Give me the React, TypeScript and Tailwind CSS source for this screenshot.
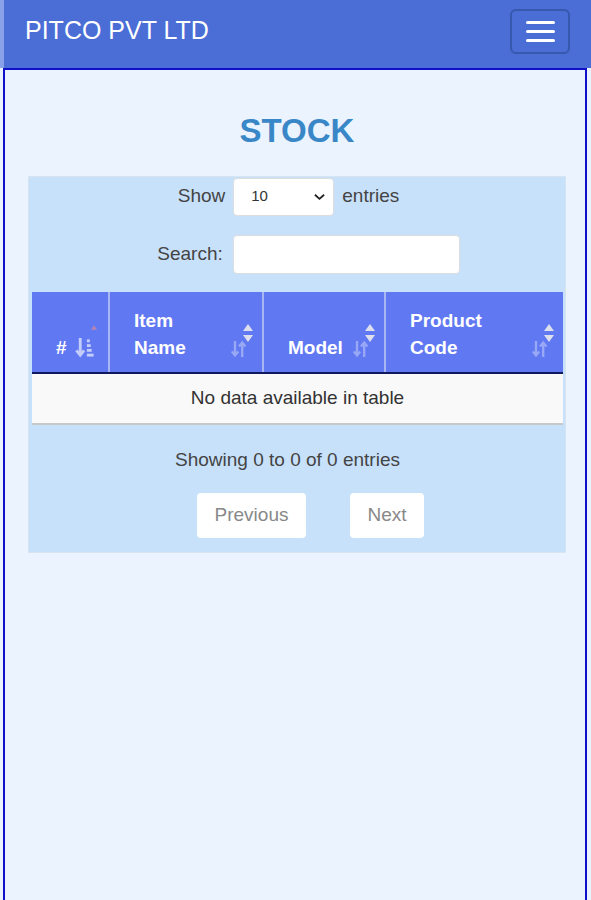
const COLUMNS = [
  { key: "#", label: ["#"], width: "w-[76px]", active: true },
  { key: "item", label: ["Item", "Name"], width: "w-[154px]" },
  { key: "model", label: ["Model"], width: "w-[122px]" },
  { key: "code", label: ["Product", "Code"], width: "flex-1" },
];

function SortIcon({ active }: { active?: boolean }) {
  if (active) {
    return (
      <>
        <svg viewBox="0 0 8 6" className="absolute right-[11px] top-[33px] h-[5px] w-[6px]">
          <path d="M4 0 L8 6 H0 Z" fill="#d98a9a" opacity="0.7" />
        </svg>
        <svg viewBox="0 0 20 22" className="absolute right-[13px] top-[45px] h-[21px] w-[20px]">
          <g fill="none" stroke="#c4cefa" strokeWidth="3">
            <path d="M5 1 V19" />
            <path d="M1 14 L5 19 L9 14" />
            <path d="M12 4 H15" />
            <path d="M12 9 H16" />
            <path d="M12 14 H17" />
            <path d="M12 19 H19" />
          </g>
        </svg>
      </>
    );
  }
  return (
    <>
      <svg viewBox="0 0 20 22" className="absolute right-[15px] top-[48px] h-[18px] w-[16px]">
        <g fill="none" stroke="#a6b4f8" strokeWidth="3" opacity="0.8">
          <path d="M5 1 V19" />
          <path d="M1 14 L5 19 L9 14" />
          <path d="M14 21 V3" />
          <path d="M10 8 L14 3 L18 8" />
        </g>
      </svg>
      <svg viewBox="0 0 10 18" className="absolute right-[9px] top-[32px] h-[18px] w-[10px]">
        <path d="M5 0 L10 7 H0 Z" fill="#dde0ec" />
        <path d="M5 18 L10 11 H0 Z" fill="#dde0ec" />
      </svg>
    </>
  );
}

export default function App() {
  return (
    <div className="flex min-h-[900px] flex-col bg-[#ebf3ff] font-['Liberation_Sans',Arial,sans-serif]">
      <header className="flex h-[68px] items-center justify-between border-l-4 border-l-[#8aa0e8] bg-[#4a6dd6] pb-[6px] pl-[21px] pr-[21px]">
        <span className="text-[25px] text-white">PITCO PVT LTD</span>
        <button className="flex h-[45px] w-[60px] flex-col items-center justify-center gap-[6px] rounded-md border-2 border-[#3658ad]">
          <span className="h-[3px] w-[29px] rounded-sm bg-white" />
          <span className="h-[3px] w-[29px] rounded-sm bg-white" />
          <span className="h-[3px] w-[29px] rounded-sm bg-white" />
        </button>
      </header>

      <main className="ml-[3px] mr-[4px] flex flex-1 flex-col border-x-2 border-t-2 border-[#1010c8] pl-[23px] pr-[19px]">
        <h1 className="mt-[36px] mb-[20px] text-center text-[33px] font-bold text-[#3a87c8]">STOCK</h1>

        <div className="border border-[#d6e4f2] bg-[#c8e1fb] pb-[14px] pl-[3px] pr-[2px] text-[19px] text-[#444]">
          <div className="flex items-center justify-center gap-2 pr-[18px] pt-[1px]">
            <span>Show</span>
            <div className="flex h-[38px] w-[101px] items-center justify-between rounded border border-[#ddd] bg-white pl-[17px] pr-2 text-[15px] text-[#333]">
              <span>10</span>
              <svg viewBox="0 0 12 8" className="h-[8px] w-[11px]">
                <path d="M1 1.5 L6 6 L11 1.5" fill="none" stroke="#222" strokeWidth="2" />
              </svg>
            </div>
            <span>entries</span>
          </div>

          <div className="mt-[19px] flex items-center justify-center gap-[10px] pl-[22px]">
            <span>Search:</span>
            <div className="h-[39px] w-[227px] rounded border border-[#ddd] bg-white" />
          </div>

          <div className="mt-[18px]">
            <div className="flex h-[82px] border-b-2 border-[#111a5c] bg-[#6078f2] font-bold text-white">
              {COLUMNS.map((c, i) => (
                <div
                  key={c.key}
                  className={`relative flex items-end pb-[11px] pl-[24px] ${c.width} ${
                    i > 0 ? "border-l-2 border-[#a9b6f4]" : ""
                  }`}
                >
                  <div className="leading-[27px]">
                    {c.label.map((l) => (
                      <div key={l}>{l}</div>
                    ))}
                  </div>
                  <SortIcon active={c.active} />
                </div>
              ))}
            </div>
            <div className="flex h-[51px] items-center justify-center border-b-2 border-[#c8c8c8] bg-[#f9f9f9] text-[#333]">
              No data available in table
            </div>
          </div>

          <div className="mt-[21px] pr-[20px] text-center text-[#444]">Showing 0 to 0 of 0 entries</div>

          <div className="mt-[19px] flex justify-center gap-[44px] pl-[26px] text-[#888]">
            <div className="flex h-[45px] w-[109px] items-center justify-center rounded bg-white">Previous</div>
            <div className="flex h-[45px] w-[74px] items-center justify-center rounded bg-white">Next</div>
          </div>
        </div>
      </main>
    </div>
  );
}
